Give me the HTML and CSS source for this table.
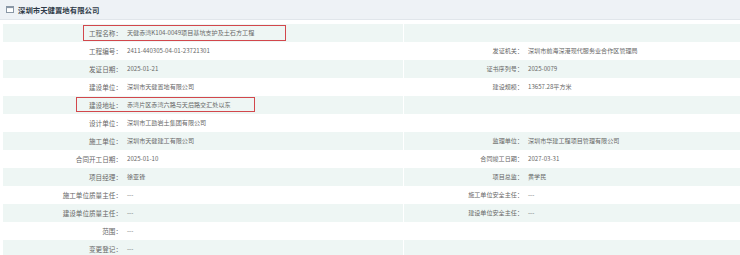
FILE: index.html
```html
<!DOCTYPE html>
<html lang="zh-CN">
<head>
<meta charset="utf-8">
<title>深圳市天健置地有限公司</title>
<link rel="stylesheet" href="styles.css">
</head>
<body>
<div class="panel">
  <div class="panel-head">
    <svg class="head-icon" width="8" height="7" viewBox="0 0 8 7"><rect x="0.5" y="0.5" width="7" height="6" fill="#fff" stroke="#8a97a6" stroke-width="1"/><rect x="0.5" y="0.5" width="7" height="1.6" fill="#8a97a6"/></svg>
    <span class="head-title">深圳市天健置地有限公司</span>
  </div>
  <div class="info">
    <div class="row alt">
      <div class="lbl">工程名称：</div><div class="val">天健赤湾K104-0049项目基坑支护及土石方工程</div><div class="lbl sep"></div><div class="val"></div>
      <div class="mark mark-name"></div>
    </div>
    <div class="row">
      <div class="lbl">工程编号：</div><div class="val">2411-440305-04-01-23721301</div><div class="lbl sep">发证机关：</div><div class="val">深圳市前海深港现代服务业合作区管理局</div>
    </div>
    <div class="row alt">
      <div class="lbl">发证日期：</div><div class="val">2025-01-21</div><div class="lbl sep">证书序列号：</div><div class="val">2025-0079</div>
    </div>
    <div class="row">
      <div class="lbl">建设单位：</div><div class="val">深圳市天健置地有限公司</div><div class="lbl sep">建设规模：</div><div class="val">13657.28平方米</div>
    </div>
    <div class="row alt">
      <div class="lbl">建设地址：</div><div class="val">赤湾片区赤湾六路与天后路交汇处以东</div><div class="lbl sep"></div><div class="val"></div>
      <div class="mark mark-addr"></div>
    </div>
    <div class="row">
      <div class="lbl">设计单位：</div><div class="val">深圳市工勘岩土集团有限公司</div><div class="lbl sep"></div><div class="val"></div>
    </div>
    <div class="row alt">
      <div class="lbl">施工单位：</div><div class="val">深圳市天健建工有限公司</div><div class="lbl sep">监理单位：</div><div class="val">深圳市华建工程项目管理有限公司</div>
    </div>
    <div class="row">
      <div class="lbl">合同开工日期：</div><div class="val">2025-01-10</div><div class="lbl sep">合同竣工日期：</div><div class="val">2027-03-31</div>
    </div>
    <div class="row alt">
      <div class="lbl">项目经理：</div><div class="val">徐亚锋</div><div class="lbl sep">项目总监：</div><div class="val">黄学民</div>
    </div>
    <div class="row">
      <div class="lbl">施工单位质量主任：</div><div class="val">---</div><div class="lbl sep">施工单位安全主任：</div><div class="val">---</div>
    </div>
    <div class="row alt">
      <div class="lbl">建设单位质量主任：</div><div class="val">---</div><div class="lbl sep">建设单位安全主任：</div><div class="val">---</div>
    </div>
    <div class="row">
      <div class="lbl">范围：</div><div class="val">---</div><div class="lbl sep"></div><div class="val"></div>
    </div>
    <div class="row alt">
      <div class="lbl">变更登记：</div><div class="val">---</div><div class="lbl sep"></div><div class="val"></div>
    </div>
  </div>
</div>
</body>
</html>
```
FILE: styles.css
```css
html, body {
  margin: 0;
  padding: 0;
  background: #ffffff;
}
body {
  width: 740px;
  height: 255px;
  overflow: hidden;
  font-family: "Noto Sans CJK SC", "Noto Sans", sans-serif;
  color: #666;
}
.panel-head {
  height: 19px;
  background: #eef2f6;
  border-bottom: 1px solid #e1e6eb;
  display: flex;
  align-items: center;
  padding-left: 6px;
  gap: 4px;
}
.head-icon {
  display: block;
}
.head-title {
  font-size: 7.4px;
  font-weight: bold;
  color: #2f3a48;
  line-height: 1;
}
.info {
  margin-top: 4px;
  padding-left: 3px;
}
.row {
  position: relative;
  display: grid;
  grid-template-columns: 119px 281px 120px 1fr;
  height: 18px;
  align-items: center;
  font-size: 6.1px;
  line-height: 18px;
}
.row.alt {
  background: #eef6f4;
}
.lbl {
  text-align: right;
  white-space: nowrap;
  color: #666;
  height: 18px;
}
.row > .lbl:first-child {
  font-size: 6.6px;
}
.val {
  padding-left: 5px;
  white-space: nowrap;
  color: #666;
  height: 18px;
}
.sep {
  border-left: 1px solid #ffffff;
}
.mark {
  position: absolute;
  border: 1.5px solid #d2474c;
  box-sizing: border-box;
  pointer-events: none;
}
.mark-name {
  left: 80px;
  top: 1px;
  width: 203px;
  height: 16px;
}
.mark-addr {
  left: 73px;
  top: 1px;
  width: 179px;
  height: 15px;
}
```
